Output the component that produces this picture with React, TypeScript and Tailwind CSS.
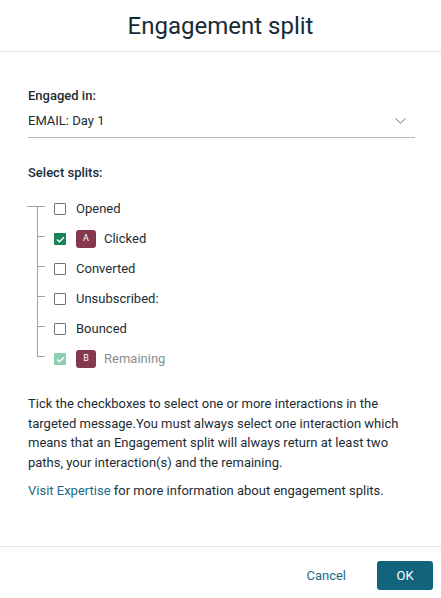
import React from "react";

type Split = {
  label: string;
  checked?: boolean;
  disabled?: boolean;
  badge?: string;
};

const splits: Split[] = [
  { label: "Opened" },
  { label: "Clicked", checked: true, badge: "A" },
  { label: "Converted" },
  { label: "Unsubscribed:" },
  { label: "Bounced" },
  { label: "Remaining", checked: true, disabled: true, badge: "B" },
];

function Checkbox({ checked, disabled }: { checked?: boolean; disabled?: boolean }) {
  if (!checked) {
    return <span className="block h-[12px] w-[12px] rounded-[1px] border border-[#6f7479] bg-white" />;
  }
  return (
    <span
      className={`flex h-[12px] w-[12px] items-center justify-center rounded-[1px] ${
        disabled ? "bg-[#8ccfb0]" : "bg-[#178457]"
      }`}
    >
      <svg width="9" height="7" viewBox="0 0 9 7" fill="none">
        <path d="M1 3.6 L3.4 5.8 L8 1.2" stroke="white" strokeWidth="1.3" />
      </svg>
    </span>
  );
}

function TreeCell({ first, last }: { first: boolean; last: boolean }) {
  return (
    <div className="relative h-full w-[26px] shrink-0">
      {/* vertical */}
      <span
        className={`absolute left-[9px] w-px bg-[#9ea3a7] ${
          first ? "top-[12px] bottom-0" : last ? "top-0 h-[12px]" : "top-0 bottom-0"
        }`}
      />
      {/* horizontal */}
      <span
        className={`absolute top-[12px] h-px bg-[#9ea3a7] ${
          first ? "left-[-1px] w-[18px]" : "left-[9px] w-[8px]"
        }`}
      />
    </div>
  );
}

export default function App() {
  return (
    <div
      className="flex h-screen w-full flex-col bg-white text-[#1d2c34]"
      style={{ fontFamily: "Roboto, 'Liberation Sans', sans-serif" }}
    >
      {/* Header */}
      <div className="flex h-[52px] shrink-0 items-center justify-center border-b border-[#e6e8ea]">
        <h1 className="text-[24px] font-normal leading-none text-[#172a33]">Engagement split</h1>
      </div>

      {/* Body */}
      <div className="flex-1 pl-[28px] pr-[26px] pt-[36px]">
        <p className="text-[13px] font-medium leading-[16px]">Engaged in:</p>
        <div className="flex h-[34px] items-center justify-between border-b border-[#b7bcc0]">
          <span className="text-[13px]">EMAIL: Day 1</span>
          <svg className="mr-[9px]" width="11" height="6" viewBox="0 0 11 6" fill="none">
            <path d="M0.5 0.5 L5.5 5.2 L10.5 0.5" stroke="#6b7177" strokeWidth="1" />
          </svg>
        </div>

        <p className="mt-[27px] text-[13px] font-medium leading-[16px]">Select splits:</p>

        <div className="mt-[13px]">
          {splits.map((s, i) => (
            <div key={s.label} className="flex h-[30px] items-center">
              <TreeCell first={i === 0} last={i === splits.length - 1} />
              <Checkbox checked={s.checked} disabled={s.disabled} />
              <div className="ml-[10px] flex items-center gap-[8px]">
                {s.badge && (
                  <span className="flex h-[18px] w-[20px] items-center justify-center rounded-[3px] bg-[#86384f] text-[9px] text-white">
                    {s.badge}
                  </span>
                )}
                <span className={`text-[13px] ${s.disabled ? "text-[#8a8d90]" : ""}`}>{s.label}</span>
              </div>
            </div>
          ))}
        </div>

        <p className="mt-[20px] text-[13px] leading-[19.5px]">
          Tick the checkboxes to select one or more interactions in the targeted message.You must always
          select one interaction which means that an Engagement split will always return at least two
          paths, your interaction(s) and the remaining.
        </p>
        <p className="mt-[9px] text-[13px] leading-[19.5px]">
          <a href="#" className="text-[#1c6b84]">
            Visit Expertise
          </a>{" "}
          for more information about engagement splits.
        </p>
      </div>

      {/* Footer */}
      <div className="flex h-[52px] shrink-0 items-start justify-end gap-[15px] border-t border-[#e6e8ea] pr-[8px] pt-[14px]">
        <button className="flex h-[29px] items-center px-[16px] text-[13px] text-[#1c6b84]">Cancel</button>
        <button className="flex h-[29px] w-[56px] items-center justify-center rounded-[3px] bg-[#12647d] text-[13px] text-white">
          OK
        </button>
      </div>
    </div>
  );
}
